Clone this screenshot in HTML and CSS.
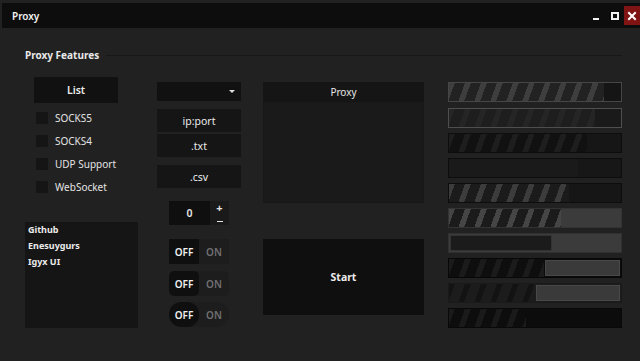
FILE: index.html
```html
<!DOCTYPE html>
<html>
<head>
<meta charset="utf-8">
<link rel="stylesheet" href="styles.css">
</head>
<body>
<div class="window">
  <header class="titlebar">
    <span class="title">Proxy</span>
    <div class="controls">
      <span class="ctl min"><span class="min-line"></span></span>
      <span class="ctl max"><span class="max-box"></span></span>
      <span class="ctl close">
        <svg width="10" height="10" viewBox="0 0 10 10"><path d="M2 2 L8 8 M8 2 L2 8" stroke="#fff" stroke-width="2" stroke-linecap="square"/></svg>
      </span>
    </div>
  </header>
  <main class="content">
    <div class="section-head">
      <span class="section-title">Proxy Features</span>
      <span class="rule"></span>
    </div>
    <div class="columns">
      <div class="col col-a">
        <button class="btn list-btn">List</button>
        <ul class="checks">
          <li class="check"><span class="box"></span><span class="label">SOCKS5</span></li>
          <li class="check"><span class="box"></span><span class="label">SOCKS4</span></li>
          <li class="check"><span class="box"></span><span class="label">UDP Support</span></li>
          <li class="check"><span class="box"></span><span class="label">WebSocket</span></li>
        </ul>
        <ul class="listbox">
          <li>Github</li>
          <li>Enesuygurs</li>
          <li>Igyx UI</li>
        </ul>
      </div>
      <div class="col col-b">
        <div class="dropdown"><span class="caret"></span></div>
        <button class="btn field ip">ip:port</button>
        <button class="btn field txt">.txt</button>
        <button class="btn field csv">.csv</button>
        <div class="numeric">
          <span class="num-value">0</span>
          <span class="num-spin"><span class="plus">+</span><span class="minus"></span></span>
        </div>
        <div class="toggle t-square"><span class="off">OFF</span><span class="on">ON</span></div>
        <div class="toggle t-round"><span class="off">OFF</span><span class="on">ON</span></div>
        <div class="toggle t-pill"><span class="off">OFF</span><span class="on">ON</span></div>
      </div>
      <div class="col col-c">
        <section class="panel">
          <div class="panel-head">Proxy</div>
          <div class="panel-body"></div>
        </section>
        <button class="btn start">Start</button>
      </div>
      <div class="col col-d">
        <div class="bar b1"><span class="fill stripes" style="width:90%"></span><span class="rest"></span></div>
        <div class="bar b2"><span class="fill stripes" style="width:85%"></span><span class="rest"></span></div>
        <div class="bar b3"><span class="fill stripes" style="width:80%"></span><span class="rest"></span></div>
        <div class="bar b4"><span class="fill" style="width:75%"></span><span class="rest"></span></div>
        <div class="bar b5"><span class="fill stripes" style="width:70%"></span><span class="rest"></span></div>
        <div class="bar b6"><span class="fill stripes" style="width:65%"></span><span class="rest"></span></div>
        <div class="bar b7"><span class="fill" style="width:60%"></span><span class="rest"></span></div>
        <div class="bar b8"><span class="fill stripes" style="width:55%"></span><span class="rest"></span></div>
        <div class="bar b9"><span class="fill stripes" style="width:50%"></span><span class="rest"></span></div>
        <div class="bar b10"><span class="fill stripes" style="width:45%"></span><span class="rest"></span></div>
      </div>
    </div>
  </main>
</div>
</body>
</html>
```

FILE: styles.css
```css
* { box-sizing: border-box; }
html, body { margin: 0; padding: 0; }
body {
  background: #202020;
  font-family: "Noto Sans", "Open Sans", sans-serif;
  color: #e6e6e6;
}
.window {
  width: 640px;
  height: 361px;
  background: #212121;
  padding-top: 3px;
  overflow: hidden;
}
.titlebar {
  height: 25px;
  margin-left: 2px;
  background: #0d0d0d;
  display: flex;
  align-items: center;
  justify-content: space-between;
}
.title {
  font-size: 10px;
  font-weight: 600;
  color: #f2f2f2;
  padding-left: 10px;
}
.controls {
  display: flex;
  align-items: center;
  height: 100%;
}
.ctl {
  display: flex;
  align-items: center;
  justify-content: center;
  height: 18px;
}
.min { width: 14px; margin-right: 5px; }
.min-line { width: 6px; height: 2px; background: #f2f2f2; margin-top: 6px; }
.max { width: 14px; margin-right: 2px; }
.max-box { width: 8px; height: 8px; border: 2px solid #f2f2f2; }
.close {
  width: 16px;
  height: 19px;
  background: #801313;
}
.content {
  padding: 0 18px 0 25px;
}
.section-head {
  display: flex;
  align-items: center;
  height: 14px;
  margin-top: 20px;
}
.section-title {
  font-size: 10px;
  font-weight: 700;
  color: #e8e8e8;
  white-space: nowrap;
}
.rule {
  flex: 1;
  height: 1px;
  background: #171717;
  margin-left: 7px;
}
.columns {
  display: flex;
  align-items: flex-start;
  margin-top: 15px;
}
.btn {
  display: flex;
  align-items: center;
  justify-content: center;
  border: 0;
  padding: 0;
  font-family: inherit;
  color: #ececec;
}
.col-a { width: 113px; }
.list-btn {
  margin-left: 9px;
  width: 84px;
  height: 26px;
  background: #111111;
  font-size: 10.5px;
  font-weight: 600;
}
.checks {
  list-style: none;
  margin: 3px 0 0;
  padding: 0;
}
.check {
  height: 23px;
  display: flex;
  align-items: center;
}
.box {
  width: 12px;
  height: 12px;
  background: #151515;
  margin-left: 11px;
  margin-right: 7px;
}
.label {
  font-size: 10px;
  color: #e4e4e4;
}
.listbox {
  list-style: none;
  margin: 24px 0 0;
  padding: 0 0 0 3px;
  height: 106px;
  background: #151515;
}
.listbox li {
  height: 16px;
  line-height: 15px;
  font-size: 9px;
  font-weight: 700;
  color: #ececec;
}
.col-b {
  width: 84px;
  margin-left: 19px;
  padding-top: 5px;
  display: flex;
  flex-direction: column;
  align-items: center;
}
.dropdown {
  width: 84px;
  height: 19px;
  background: #111111;
  position: relative;
}
.caret {
  position: absolute;
  right: 6px;
  top: 8px;
  width: 0;
  height: 0;
  border-left: 3px solid transparent;
  border-right: 3px solid transparent;
  border-top: 3px solid #e0e0e0;
}
.field {
  width: 84px;
  height: 23px;
  background: #151515;
  font-size: 10.5px;
}
.ip { margin-top: 8px; }
.txt { margin-top: 2px; }
.csv { margin-top: 8px; }
.numeric {
  margin-top: 13px;
  width: 60px;
  height: 24px;
  display: flex;
}
.num-value {
  width: 41px;
  background: #0f0f0f;
  display: flex;
  align-items: center;
  justify-content: center;
  font-size: 10.5px;
  font-weight: 600;
}
.num-spin {
  flex: 1;
  background: #1a1a1a;
  display: flex;
  flex-direction: column;
  align-items: center;
  justify-content: space-between;
  padding: 2px 0 3px;
}
.plus {
  font-size: 11px;
  line-height: 9px;
  font-weight: 700;
  color: #e6e6e6;
}
.minus {
  width: 6px;
  height: 1.5px;
  background: #e6e6e6;
}
.toggle {
  width: 60px;
  height: 25px;
  display: flex;
  background: #1d1d1d;
  font-size: 10px;
  font-weight: 600;
}
.toggle .off {
  width: 30px;
  background: #0f0f0f;
  color: #f0f0f0;
  display: flex;
  align-items: center;
  justify-content: center;
}
.toggle .on {
  flex: 1;
  color: #707070;
  display: flex;
  align-items: center;
  justify-content: center;
}
.t-square { margin-top: 14px; }
.t-round { margin-top: 7px; border-radius: 5px; overflow: hidden; }
.t-round .off { border-radius: 5px; }
.t-pill { margin-top: 6px; border-radius: 12px; overflow: hidden; }
.t-pill .off { border-radius: 12px; }
.col-c {
  width: 161px;
  margin-left: 22px;
  padding-top: 5px;
}
.panel {
  height: 121px;
  display: flex;
  flex-direction: column;
}
.panel-head {
  height: 20px;
  background: #151515;
  display: flex;
  align-items: center;
  justify-content: center;
  font-size: 10px;
  color: #e8e8e8;
}
.panel-body {
  flex: 1;
  background: #1a1a1a;
  border: 1px solid #181818;
}
.start {
  margin-top: 36px;
  width: 161px;
  height: 76px;
  background: #0f0f0f;
  font-size: 10.5px;
  font-weight: 700;
}
.col-d {
  width: 174px;
  margin-left: 24px;
  padding-top: 5px;
  display: flex;
  flex-direction: column;
  gap: 5px;
}
.bar {
  height: 20px;
  display: flex;
  border: 1px solid #0d0d0d;
}
.b1 { margin-bottom: 1px; }
.fill { display: block; height: 100%; }
.rest { flex: 1; }
.stripes {
  background: repeating-linear-gradient(110deg, var(--s) 0 5.5px, var(--g) 5.5px 15px);
}
.b1 { border-color: #464646; }
.b1 .fill { --s: #3e3e3e; --g: #222222; }
.b1 .rest { background: #151515; }
.b2 { border-color: #4e4e4e; }
.b2 .fill { --s: #252525; --g: #1e1e1e; }
.b2 .rest { background: #1a1a1a; }
.b3 .fill { --s: #1e1e1e; --g: #111111; }
.b3 .rest { background: #161616; }
.b4 .fill { background: #1a1a1a; }
.b4 .rest { background: #171717; }
.b5 .fill { --s: #3c3c3c; --g: #1b1b1b; }
.b5 .rest { background: #161616; }
.b6 { border-color: #333333; }
.b6 .fill { --s: #454545; --g: #1b1b1b; }
.b6 .rest { background: #3b3b3b; }
.b7 { border-color: #303030; background: #3b3b3b; padding: 1px; }
.b7 .fill { background: #1b1b1b; border: 1px solid #333333; }
.b8 { border-color: #080808; background: #0b0b0b; }
.b8 .fill { --s: #1b1b1b; --g: #0e0e0e; }
.b8 .rest { background: #3a3a3a; border: 1px solid #484848; margin: 1px; }
.b9 { border-color: #1a1a1a; background: #1c1c1c; }
.b9 .fill { --s: #131313; --g: #1c1c1c; }
.b9 .rest { background: #3a3a3a; border: 1px solid #484848; margin: 1px; }
.b10 { border-color: #090909; background: #0c0c0c; }
.b10 .fill { --s: #1a1a1a; --g: #0d0d0d; }
.b10 .rest { background: #0c0c0c; }
```
